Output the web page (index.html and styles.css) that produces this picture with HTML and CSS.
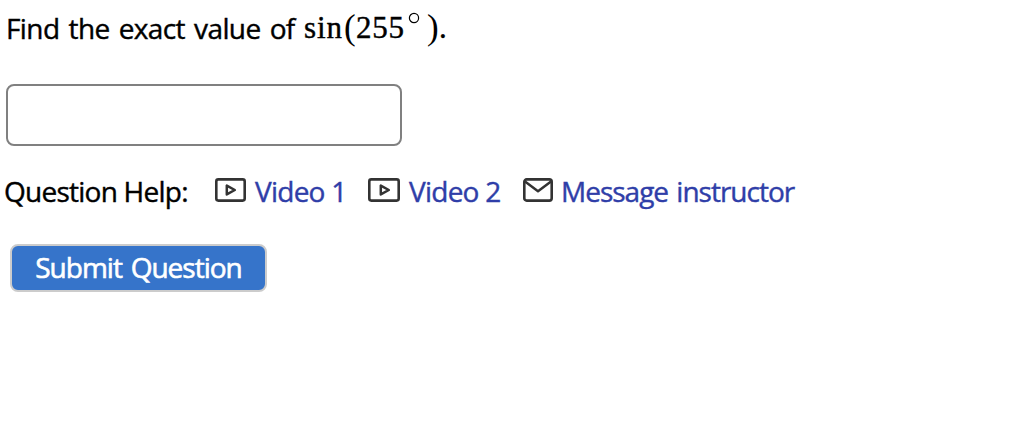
FILE: index.html
```html
<!DOCTYPE html>
<html lang="en">
<head>
    <meta charset="UTF-8">
    <meta name="viewport" content="width=device-width, initial-scale=1.0">
    <title>Question</title>
    <link rel="stylesheet" href="styles.css">
</head>
<body>
    <form class="question">
        <div class="prompt">
            <span class="prompt-text">Find the exact value of</span>
            <span class="math"><span class="fn">sin</span><span class="paren">(</span><span class="num">255</span><svg class="degree" width="12" height="12" viewBox="0 0 12 12"><circle cx="6" cy="6" r="4.6" fill="none" stroke="#000" stroke-width="1.2"/></svg><span class="paren">)</span><span class="dot">.</span></span>
        </div>
        <input type="text" class="answer" aria-label="Answer">
        <div class="help">
            <span class="help-label">Question Help:</span>
            <a href="#" class="help-link">
                <svg class="icon" width="31" height="24" viewBox="0 0 31 24" fill="none" stroke="#333" stroke-linejoin="round"><rect x="1.3" y="1.4" width="28.4" height="21.2" rx="2" stroke-width="2.6"/><path d="M11.8 7.6v8.8l8-4.4z" stroke-width="2.5"/></svg>
                <span class="video">Video 1</span>
            </a>
            <a href="#" class="help-link">
                <svg class="icon" width="32" height="24" viewBox="0 0 32 24" fill="none" stroke="#333" stroke-linejoin="round"><rect x="1.3" y="1.4" width="29.4" height="21.2" rx="2" stroke-width="2.6"/><path d="M12.8 7.6v8.8l8-4.4z" stroke-width="2.5"/></svg>
                <span class="video">Video 2</span>
            </a>
            <a href="#" class="help-link">
                <svg class="icon" width="30" height="24" viewBox="0 0 30 24" fill="none" stroke="#333" stroke-linejoin="round"><rect x="1.3" y="1.4" width="27.4" height="21.2" rx="2.4" stroke-width="2.6"/><path d="M2 3.6l13 9.6 13-9.6" stroke-width="2.5"/></svg>
                <span class="message">Message instructor</span>
            </a>
        </div>
        <button type="button" class="submit">Submit Question</button>
    </form>
</body>
</html>
```

FILE: styles.css
```css
body {
    margin: 0;
    background: #fff;
    color: #000;
    font-family: "Trebuchet MS", "Open Sans", sans-serif;
    font-size: 28px;
    font-stretch: 88%;
    line-height: 40px;
    letter-spacing: -0.75px;
    -webkit-text-stroke: 0.4px;
}
.question {
    display: flex;
    flex-direction: column;
    align-items: flex-start;
    padding: 8px 4px;
}
.prompt {
    display: flex;
    height: 40px;
    margin-left: 2px;
}
.prompt-text {
    width: 298px;
    letter-spacing: -0.6px;
    word-spacing: 2.4px;
    white-space: nowrap;
}
.math {
    display: flex;
    font-family: "Liberation Serif", serif;
    font-size: 31px;
    letter-spacing: 0;
}
.fn {
    width: 40px;
    letter-spacing: 0.9px;
}
.paren {
    width: 12px;
    font-size: 35px;
    -webkit-text-stroke: 0;
}
.num {
    width: 51px;
    letter-spacing: 0.8px;
}
.degree {
    margin: 4px 7px 0 1px;
}
.answer {
    box-sizing: border-box;
    width: 396px;
    height: 62px;
    margin: 36px 0 0 2px;
    padding: 6px 12px;
    border: 2px solid #808080;
    border-radius: 8px;
    font: inherit;
}
.help {
    display: flex;
    margin-top: 25px;
    white-space: nowrap;
}
.help-label {
    width: 211px;
}
.help-link {
    display: flex;
    gap: 9px;
    color: #2f3ea8;
    text-decoration: none;
}
.icon {
    margin-top: 7px;
}
.video {
    width: 113px;
}
.help-link:last-child {
    gap: 8px;
    margin-left: 1px;
}
.message {
    letter-spacing: -1px;
    word-spacing: 2px;
}
.submit {
    box-sizing: border-box;
    width: 257px;
    height: 48px;
    margin: 33px 0 0 6px;
    padding: 0 0 2px;
    background: #3674ca;
    color: #fff;
    border: 2px solid #ccc;
    border-radius: 8px;
    font: inherit;
    letter-spacing: -1px;
    word-spacing: 2.5px;
    -webkit-text-stroke: 0.6px;
    cursor: pointer;
}
```
